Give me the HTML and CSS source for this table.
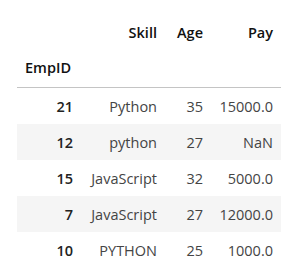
FILE: index.html
```html
<!DOCTYPE html>
<html>
<head>
<meta charset="utf-8">
<link rel="stylesheet" href="styles.css">
</head>
<body>
<div class="output">
<table class="dataframe">
  <colgroup>
    <col class="c-index">
    <col class="c-skill">
    <col class="c-age">
    <col class="c-pay">
  </colgroup>
  <thead>
    <tr class="head-cols">
      <th></th>
      <th>Skill</th>
      <th>Age</th>
      <th>Pay</th>
    </tr>
    <tr class="head-index">
      <th>EmpID</th>
      <th></th>
      <th></th>
      <th></th>
    </tr>
  </thead>
  <tbody>
    <tr><th>21</th><td>Python</td><td>35</td><td>15000.0</td></tr>
    <tr><th>12</th><td>python</td><td>27</td><td>NaN</td></tr>
    <tr><th>15</th><td>JavaScript</td><td>32</td><td>5000.0</td></tr>
    <tr><th>7</th><td>JavaScript</td><td>27</td><td>12000.0</td></tr>
    <tr><th>10</th><td>PYTHON</td><td>25</td><td>1000.0</td></tr>
  </tbody>
</table>
</div>
</body>
</html>
```
FILE: styles.css
```css
html, body {
  margin: 0;
  padding: 0;
  background: #ffffff;
}

.output {
  padding: 14px 0 0 17px;
}

.dataframe {
  border-collapse: collapse;
  border-spacing: 0;
  table-layout: fixed;
  width: 264px;
  font-family: "Segoe UI", "Open Sans", "Noto Sans", sans-serif;
  font-size: 14.5px;
  line-height: 20px;
  color: #444444;
}

.c-index { width: 64px; }
.c-skill { width: 84px; }
.c-age { width: 46px; }
.c-pay { width: 70px; }

.dataframe th,
.dataframe td {
  text-align: right;
  vertical-align: middle;
  white-space: nowrap;
  padding: 9px 8px 7px 8px;
}

.dataframe thead th {
  font-weight: 600;
  color: #111111;
}

.dataframe thead tr.head-cols th {
  padding-top: 9px;
  padding-bottom: 8px;
}

.dataframe thead tr.head-index th {
  text-align: left;
  padding-top: 7px;
  padding-bottom: 9px;
}

.dataframe thead {
  border-bottom: 1px solid #c4c4c4;
}

.dataframe tbody th {
  font-weight: 600;
  color: #222222;
}

.dataframe tbody tr:nth-child(even) {
  background: #f5f5f5;
}
```
